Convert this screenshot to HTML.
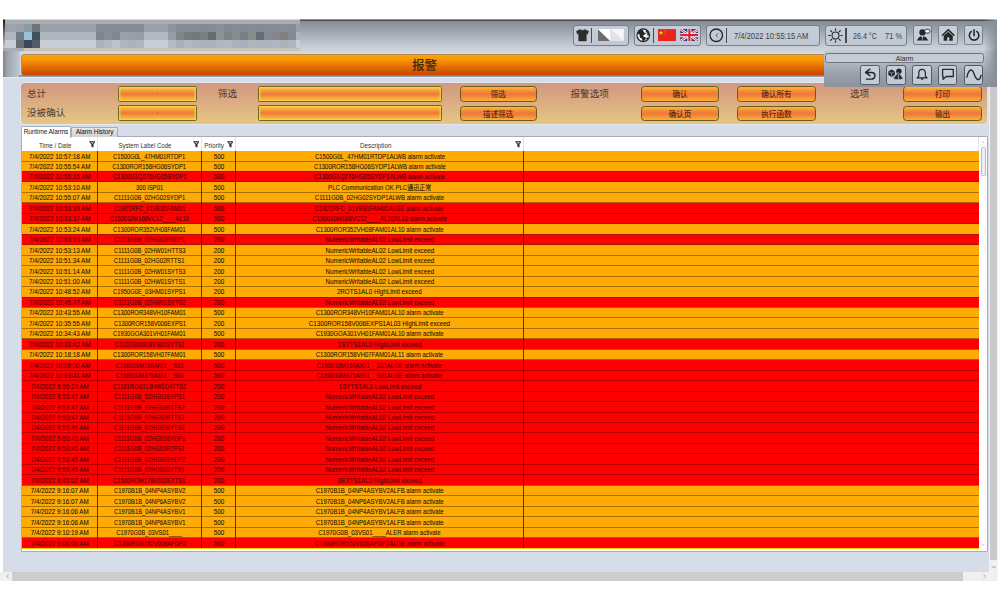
<!DOCTYPE html>
<html lang="zh"><head><meta charset="utf-8"><title>报警</title>
<style>
html,body{margin:0;padding:0;background:#fff;}
body{width:1000px;height:600px;overflow:hidden;position:relative;font-family:"Liberation Sans","Noto Sans CJK SC",sans-serif;}
#app{position:absolute;left:0;top:0;width:1000px;height:600px;overflow:hidden;}
#app div,#app span,#app svg{position:absolute;box-sizing:border-box;}
#bg{left:3px;top:19.5px;width:994px;height:560.5px;background:#d6dde9;}
#bgu{left:3px;top:76.5px;width:994px;height:2.5px;background:linear-gradient(to bottom,#e6ebf2,#d6dde9);}
#hdr{left:3px;top:19px;width:994px;height:57.5px;background:linear-gradient(to bottom,#7e848c 0,#8c929a 8%,#adb3bb 30%,#cbd0d8 50%,#d5dae2 60%,#d3d9e2 100%);}
#hdrtop{left:299.8px;top:19px;width:697.2px;height:2.4px;background:linear-gradient(to bottom,#111316,#2a2d31 45%,#6a7078);}
#hdrl{left:3px;top:19px;width:17px;height:57.5px;background:linear-gradient(to right,#7f858d 0,#9ea4ac 25%,#c4c9d1 100%);}
#hdrl2{left:3px;top:19px;width:1.5px;height:30px;background:linear-gradient(to bottom,#111,#888 60%,rgba(200,200,200,0));}
#hdrr{left:984px;top:19px;width:13px;height:67.5px;background:linear-gradient(to right,rgba(150,156,164,0) 0,#8a9098 100%);}
#hdrb{left:19px;top:75px;width:978px;height:1.8px;background:linear-gradient(to bottom,rgba(110,124,144,0.75),rgba(130,142,160,0.75));}
#pix{left:3px;top:19px;width:296.8px;height:32.4px;overflow:hidden;background:#a9adb1;}
#pix i{position:absolute;width:8px;height:8px;display:block;}
#pixb{left:24px;top:48px;width:276px;height:3.2px;background:#cbc3b8;}
#obar{left:20.5px;top:54px;width:812px;height:21.5px;border:1px solid #8495ad;border-top-color:#b08a50;border-radius:3.5px;background:linear-gradient(to bottom,#ffa400 0,#f79400 25%,#e67400 55%,#d45400 85%,#c84600 100%);}
#otitle{left:20.5px;top:56.3px;width:808px;height:21.5px;text-align:center;font-size:12.5px;line-height:21px;color:#40260f;font-weight:500;}
.grp{border:1px solid #76808d;border-radius:3px;background:linear-gradient(to bottom,#c5cdd8,#c0c8d3);top:25.3px;height:20.3px;}
.sep{width:1.2px;background:#4a4a4a;top:27.9px;height:15.2px;}
.htxt{font-size:8.8px;line-height:22px;color:#3e3e3e;top:25.3px;height:20.3px;white-space:nowrap;}
.htxt span{position:static !important;display:inline-block;transform-origin:0 50%;}
.btn{border:1px solid #76808d;border-radius:2.5px;background:linear-gradient(to bottom,#c7cfda,#c1c9d4);}
.btn.sb{border-color:#535b65;}
#sub{left:824.3px;top:49.8px;width:172.7px;height:37.2px;background:linear-gradient(to bottom,#c6cbd3 0,#b3b9c2 30%,#9aa1ab 65%,#8b929c 100%);border-radius:3px 0 0 2px;}
#subr{left:984px;top:49.5px;width:13px;height:37.5px;background:linear-gradient(to right,rgba(150,156,164,0) 0,#878d95 100%);}
#alab{left:825.3px;top:52.8px;width:158.5px;height:9.9px;border:1px solid #6b7480;border-radius:2.5px;background:#c4ccd7;font-size:6.7px;line-height:9.4px;text-align:center;color:#2a2a2a;}
/* panel */
#panel{left:19.8px;top:81.5px;width:968px;height:43.3px;border-radius:4px;background:linear-gradient(to bottom,#d3987f 0,#dbab82 45%,#e6c682 100%);border:1px solid #dfe8f2;background-clip:padding-box;}
.lab{font-size:9.6px;color:#4a3a30;white-space:nowrap;line-height:14px;height:14px;}
.inp{border:1px solid #6e6a28;border-radius:1.5px;height:15.5px;background:
 linear-gradient(to right,rgba(252,214,60,0.9) 0,rgba(252,214,60,0) 2.5px,rgba(252,214,60,0) calc(100% - 2.5px),rgba(252,214,60,0.9) 100%),
 linear-gradient(to bottom,#fcd63c 0,#f8ac3c 18%,#ee7a3a 50%,#f8ac3c 82%,#fcd63c 100%);}
.inp b{position:absolute;left:50%;top:6px;width:1.6px;height:1.6px;margin-left:-0.8px;background:#8a7a70;border-radius:1px;}
.pb{border:1px solid #6a5a1c;border-radius:3.5px;height:15.6px;text-align:center;font-size:7.6px;font-weight:500;line-height:15.4px;color:#5e2a10;white-space:nowrap;background:
 linear-gradient(to bottom,#fdbb2e 0,#f6943a 24%,#ee7a3c 45%,#ee7a3c 55%,#f6943a 77%,#fbb030 100%);}
/* tabs + grid */
#tabs{left:0;top:0;width:0;height:0;}
.tab{font-size:6.5px;line-height:9.5px;white-space:nowrap;text-align:center;color:#222;letter-spacing:-0.1px;}
.tab.sel{left:21px;top:126px;width:50px;height:11.5px;background:#fff;border:1px solid #a9b2bf;border-bottom:none;border-radius:1.5px 1.5px 0 0;}
.tab.uns{left:71.3px;top:126.8px;width:46.5px;height:10.2px;background:linear-gradient(to bottom,#e6e6e6,#d2d2d2);border:1px solid #a3abb7;border-bottom:none;border-radius:1.5px 1.5px 0 0;color:#111;line-height:8.5px;}
#grid{left:21px;top:136px;width:966.5px;height:416px;background:#fff;border:1px solid #a4adba;border-radius:0 1px 1px 1px;overflow:hidden;}
#ghead{left:0;top:0;width:966px;height:13.5px;background:#fff;}
.hc{top:0;height:13.5px;border-right:1px solid #e0e3e8;font-size:7.1px;line-height:18.2px;text-align:center;color:#333;white-space:nowrap;padding-right:8.5px;}
.hc span{position:static !important;display:inline-block;transform:scaleX(0.89);}
.fun{width:6.8px;height:6.8px;top:4.4px;right:1.6px;}
.row{left:0px;width:956.6px;height:10.46px;}
.row.o{background:#ffab05;}
.row.r{background:#ff0000;}
.row::before{content:"";position:absolute;left:0;right:0;top:-0.45px;height:0.9px;background:rgba(80,45,0,0.48);z-index:2;}
.row.r::before{background:rgba(90,0,0,0.42);}
.row.first::before{display:none}
.row.o+.row.r::before,.row.r+.row.o::before{background:rgba(110,30,0,0.55);}
.c{top:0;height:10.46px;border-right:1px solid rgba(40,20,0,0.75);font-size:7.1px;line-height:12.6px;text-align:center;color:#151005;white-space:nowrap;overflow:hidden;-webkit-text-stroke:0.06px currentColor;}
.c span{position:static !important;display:inline-block;}
.s887{transform:scaleX(.887)}.s818{transform:scaleX(.818)}.s890{transform:scaleX(.89)}.s845{transform:scaleX(.845)}.s850{transform:scaleX(.85)}.s878{transform:scaleX(.878)}
.row.r .c{color:#4c0000;}
#vsb{left:957.5px;top:0;width:8px;height:416px;background:#fdfdfd;}
#vsb .th{left:1.6px;top:9.5px;width:4.6px;height:29.5px;background:#eceff3;border:1px solid #b9bec6;border-radius:1.5px;}
#vsb .ar{left:2.3px;width:0;height:0;border-left:1.7px solid transparent;border-right:1.7px solid transparent;}
#vsb .up{border-bottom:2.2px solid #c8c8c8;}
#vsb .dn{border-top:2.2px solid #c8c8c8;}
#ylast{left:0px;width:956.6px;height:1.2px;background:#ffd800;}
#hsb{left:0px;top:571.5px;width:988.5px;height:9px;background:#f0f0f0;}
#hsb .hth{left:11.7px;top:0;width:951.3px;height:9.5px;background:#cdcdcd;}
#hsb svg{top:2.5px;width:3.5px;height:5px;}
#hsb .la{left:5.5px;}
#hsb .ra{left:982.5px;}
#osb{left:988.5px;top:86.5px;width:9.5px;height:494px;background:linear-gradient(to right,#f0f0f0 85%,#f8f8f8);}
#osb .vth{left:1px;top:0;width:7px;height:473px;background:#cacaca;}
#osb svg{left:2px;top:478px;width:5.5px;height:4px;}

#topaa{left:0;top:19px;width:1000px;height:1px;background:rgba(255,255,255,0.5);}
.c:last-child{border-right:none;}

</style></head><body>
<div id="app">
<div id="bg"></div><div id="bgu"></div>
<div id="panel"></div>
<div class="lab" style="left:27px;top:87px">总计</div><div class="lab" style="left:27px;top:106px">没被确认</div><div class="lab" style="left:218px;top:87px">筛选</div><div class="lab" style="left:570.5px;top:87px">报警选项</div><div class="lab" style="left:850px;top:87px">选项</div>
<div class="inp" style="left:118.2px;top:86.3px;width:78.5px"><b></b></div><div class="inp" style="left:118.2px;top:105.3px;width:78.5px"><b></b></div><div class="inp" style="left:258.2px;top:86.3px;width:183.5px"></div><div class="inp" style="left:258.2px;top:105.3px;width:183.5px"></div>
<div class="pb" style="left:459.5px;top:86.2px;width:77.5px">筛选</div><div class="pb" style="left:459.5px;top:105.5px;width:77.5px">描述筛选</div><div class="pb" style="left:640.8px;top:86.2px;width:78.5px">确认</div><div class="pb" style="left:640.8px;top:105.5px;width:78.5px">确认页</div><div class="pb" style="left:737px;top:86.2px;width:78.8px">确认所有</div><div class="pb" style="left:737px;top:105.5px;width:78.8px">执行函数</div><div class="pb" style="left:903.4px;top:86.2px;width:78.2px">打印</div><div class="pb" style="left:903.4px;top:105.5px;width:78.2px">输出</div>
<div id="hdr"></div><div id="hdrtop"></div><div id="hdrl"></div><div id="hdrr"></div>
<div id="pix"><i style="left:0px;top:5px;width:5.3px;background:#9ba1a9"></i><i style="left:5px;top:5px;width:8.3px;background:#9ea4ac"></i><i style="left:13px;top:5px;width:8.3px;background:#9aa0a8"></i><i style="left:21px;top:5px;width:8.3px;background:#8a9ba6"></i><i style="left:29px;top:5px;width:8.3px;background:#707479"></i><i style="left:37px;top:5px;width:8.3px;background:#9ba1a9"></i><i style="left:45px;top:5px;width:8.3px;background:#9ba1a9"></i><i style="left:53px;top:5px;width:8.3px;background:#9ba1a9"></i><i style="left:61px;top:5px;width:8.3px;background:#9ba1a9"></i><i style="left:69px;top:5px;width:8.3px;background:#9ba1a9"></i><i style="left:77px;top:5px;width:8.3px;background:#9ba1a9"></i><i style="left:85px;top:5px;width:8.3px;background:#9ba1a9"></i><i style="left:93px;top:5px;width:8.3px;background:#878c94"></i><i style="left:101px;top:5px;width:8.3px;background:#878c94"></i><i style="left:109px;top:5px;width:8.3px;background:#878c94"></i><i style="left:117px;top:5px;width:8.3px;background:#878c94"></i><i style="left:125px;top:5px;width:8.3px;background:#878c94"></i><i style="left:133px;top:5px;width:8.3px;background:#878c94"></i><i style="left:141px;top:5px;width:8.3px;background:#9ba1a9"></i><i style="left:149px;top:5px;width:8.3px;background:#9ba1a9"></i><i style="left:157px;top:5px;width:8.3px;background:#9ba1a9"></i><i style="left:165px;top:5px;width:8.3px;background:#8f949c"></i><i style="left:173px;top:5px;width:8.3px;background:#878c95"></i><i style="left:181px;top:5px;width:8.3px;background:#868b94"></i><i style="left:189px;top:5px;width:8.3px;background:#888d95"></i><i style="left:197px;top:5px;width:8.3px;background:#848992"></i><i style="left:205px;top:5px;width:8.3px;background:#878c95"></i><i style="left:213px;top:5px;width:8.3px;background:#8a8f98"></i><i style="left:221px;top:5px;width:8.3px;background:#838891"></i><i style="left:229px;top:5px;width:8.3px;background:#868b94"></i><i style="left:237px;top:5px;width:8.3px;background:#858a93"></i><i style="left:245px;top:5px;width:8.3px;background:#878c95"></i><i style="left:253px;top:5px;width:8.3px;background:#868b93"></i><i style="left:261px;top:5px;width:8.3px;background:#888d94"></i><i style="left:269px;top:5px;width:8.3px;background:#878c94"></i><i style="left:277px;top:5px;width:8.3px;background:#8a8f97"></i><i style="left:285px;top:5px;width:8.3px;background:#868b95"></i><i style="left:293px;top:5px;width:4.3px;background:#9ba1a9"></i><i style="left:0px;top:13px;width:5.3px;background:#b0b6be"></i><i style="left:5px;top:13px;width:8.3px;background:#b2b8c0"></i><i style="left:13px;top:13px;width:8.3px;background:#6e7c85"></i><i style="left:21px;top:13px;width:8.3px;background:#9cc0d7"></i><i style="left:29px;top:13px;width:8.3px;background:#40525e"></i><i style="left:37px;top:13px;width:8.3px;background:#b0b6be"></i><i style="left:45px;top:13px;width:8.3px;background:#b0b6be"></i><i style="left:53px;top:13px;width:8.3px;background:#b0b6be"></i><i style="left:61px;top:13px;width:8.3px;background:#b0b6be"></i><i style="left:69px;top:13px;width:8.3px;background:#b0b6be"></i><i style="left:77px;top:13px;width:8.3px;background:#b0b6be"></i><i style="left:85px;top:13px;width:8.3px;background:#b0b6be"></i><i style="left:93px;top:13px;width:8.3px;background:#80858c"></i><i style="left:101px;top:13px;width:8.3px;background:#8a8e94"></i><i style="left:109px;top:13px;width:8.3px;background:#82868e"></i><i style="left:117px;top:13px;width:8.3px;background:#9aa0a8"></i><i style="left:125px;top:13px;width:8.3px;background:#999fa6"></i><i style="left:133px;top:13px;width:8.3px;background:#989ea6"></i><i style="left:141px;top:13px;width:8.3px;background:#b4bac3"></i><i style="left:149px;top:13px;width:8.3px;background:#b4bac3"></i><i style="left:157px;top:13px;width:8.3px;background:#b4bac3"></i><i style="left:165px;top:13px;width:8.3px;background:#9a9da2"></i><i style="left:173px;top:13px;width:8.3px;background:#808489"></i><i style="left:181px;top:13px;width:8.3px;background:#787c80"></i><i style="left:189px;top:13px;width:8.3px;background:#74787b"></i><i style="left:197px;top:13px;width:8.3px;background:#7b7e82"></i><i style="left:205px;top:13px;width:8.3px;background:#6a6c70"></i><i style="left:213px;top:13px;width:8.3px;background:#8b9099"></i><i style="left:221px;top:13px;width:8.3px;background:#7c818a"></i><i style="left:229px;top:13px;width:8.3px;background:#8a8c90"></i><i style="left:237px;top:13px;width:8.3px;background:#7a808a"></i><i style="left:245px;top:13px;width:8.3px;background:#8b8c8e"></i><i style="left:253px;top:13px;width:8.3px;background:#666c76"></i><i style="left:261px;top:13px;width:8.3px;background:#888a8e"></i><i style="left:269px;top:13px;width:8.3px;background:#828690"></i><i style="left:277px;top:13px;width:8.3px;background:#808082"></i><i style="left:285px;top:13px;width:8.3px;background:#858a94"></i><i style="left:293px;top:13px;width:4.3px;background:#b0b6be"></i><i style="left:0px;top:21px;width:5.3px;background:#c8ced6"></i><i style="left:5px;top:21px;width:8.3px;background:#c8ced6"></i><i style="left:13px;top:21px;width:8.3px;background:#6a6f76"></i><i style="left:21px;top:21px;width:8.3px;background:#3a4858"></i><i style="left:29px;top:21px;width:8.3px;background:#565c66"></i><i style="left:37px;top:21px;width:8.3px;background:#c8ced6"></i><i style="left:45px;top:21px;width:8.3px;background:#c8ced6"></i><i style="left:53px;top:21px;width:8.3px;background:#c8ced6"></i><i style="left:61px;top:21px;width:8.3px;background:#c8ced6"></i><i style="left:69px;top:21px;width:8.3px;background:#c8ced6"></i><i style="left:77px;top:21px;width:8.3px;background:#c8ced6"></i><i style="left:85px;top:21px;width:8.3px;background:#c8ced6"></i><i style="left:93px;top:21px;width:8.3px;background:#aab1ba"></i><i style="left:101px;top:21px;width:8.3px;background:#b4bac3"></i><i style="left:109px;top:21px;width:8.3px;background:#bcc2cb"></i><i style="left:117px;top:21px;width:8.3px;background:#b0b6bf"></i><i style="left:125px;top:21px;width:8.3px;background:#acb2bb"></i><i style="left:133px;top:21px;width:8.3px;background:#b0b6bf"></i><i style="left:141px;top:21px;width:8.3px;background:#c8ced6"></i><i style="left:149px;top:21px;width:8.3px;background:#c8ced6"></i><i style="left:157px;top:21px;width:8.3px;background:#c8ced6"></i><i style="left:165px;top:21px;width:8.3px;background:#b6bcc5"></i><i style="left:173px;top:21px;width:8.3px;background:#a9afb8"></i><i style="left:181px;top:21px;width:8.3px;background:#b4bac4"></i><i style="left:189px;top:21px;width:8.3px;background:#adb3bc"></i><i style="left:197px;top:21px;width:8.3px;background:#acb2bb"></i><i style="left:205px;top:21px;width:8.3px;background:#abb1ba"></i><i style="left:213px;top:21px;width:8.3px;background:#b2b8c1"></i><i style="left:221px;top:21px;width:8.3px;background:#b4bac4"></i><i style="left:229px;top:21px;width:8.3px;background:#abb1bb"></i><i style="left:237px;top:21px;width:8.3px;background:#a9afb9"></i><i style="left:245px;top:21px;width:8.3px;background:#b0b6bf"></i><i style="left:253px;top:21px;width:8.3px;background:#adb3bc"></i><i style="left:261px;top:21px;width:8.3px;background:#aeb4bd"></i><i style="left:269px;top:21px;width:8.3px;background:#b1b7c1"></i><i style="left:277px;top:21px;width:8.3px;background:#acb2bb"></i><i style="left:285px;top:21px;width:8.3px;background:#b0b6bf"></i><i style="left:293px;top:21px;width:4.3px;background:#c8ced6"></i></div><div id="pixb"></div>
<div id="hdrl2"></div><div id="obar"></div><div id="otitle">报警</div><div id="hdrb"></div>
<div class="grp" style="left:572.7px;width:56.7px"></div><svg style="left:575.5px;top:29.3px;width:13px;height:12.4px" viewBox="0 0 13 12.4"><path d="M4.300 .4C5 1.600 8 1.600 8.700 .4L12.600 2.300 11.500 5.200 10.300 4.700V12H2.700V4.700L1.500 5.200.4 2.300z" fill="#2d2d2d" stroke="#2d2d2d" stroke-width=".5" stroke-linejoin="round"/></svg><div class="sep" style="left:590.8px"></div><svg style="left:598.3px;top:29.2px;width:25.8px;height:12.2px" viewBox="0 0 25.8 12.2"><rect width="12.700" height="12.200" fill="#fdfdfd"/><path d="M0 0L12.700 12.200H0z" fill="#6b6b6b"/><path d="M0 0L12.700 12.200" stroke="#fff" stroke-width=".7"/><rect x="12.700" width="13.100" height="12.200" fill="#f6f6f6"/><path d="M12.700 0L25.800 12.200H12.700z" fill="#dde3eb"/></svg>
<div class="grp" style="left:634.3px;width:67px"></div><svg style="left:636.35px;top:28.25px;width:14.5px;height:14.5px" viewBox="0 0 14.5 14.5"><circle cx="7.250" cy="7.250" r="6.300" fill="#f2f4f6" stroke="#262626" stroke-width="1.200"/><path d="M6.800 1.200C4.200 1.500 2 3.300 1.300 5.800c.7.500 1.600.3 2.200 1 .6.900-.2 1.800.5 2.700.8.800 1.900.6 2.300 1.700.3 1-.1 2 .5 3 1-.4 1.400-1.400 2.100-2.100.7-.8 1.300-1.500.8-2.500-.7-.7-1.800-.6-2.400-1.400-.4-.8.500-1.300 1.100-1.700.6-.300 1.400-.300 1.500-1.100-.3-.8-1.300-.6-1.800-1-.5-.700-.6-1.700-1.300-2.200z" fill="#262626"/><path d="M10.200 2.200c-.7.700-.4 1.700.3 2.200.8.300 1 1.100.7 1.800-.2.800.4 1.500 1.200 1.400.6.100 1-.500.9-1.200-.2-1.800-1.400-3.400-3.100-4.200z" fill="#262626"/><path d="M10.600 9.800c-.5.600-.3 1.500.1 2.100.8-.5 1.500-1.300 1.900-2.200-.7-.3-1.500-.4-2 .1z" fill="#262626"/></svg><div class="sep" style="left:653px"></div><svg style="left:658px;top:29.2px;width:18.3px;height:12.3px" viewBox="0 0 30 20"><rect width="30" height="20" fill="#e8261c"/><path d="M5 2.200l.9 2.700h2.800l-2.300 1.700.9 2.700L5 7.600 2.700 9.300l.9-2.700L1.300 4.900h2.800z" fill="#ffde2a"/><circle cx="10" cy="2.500" r=".7" fill="#ffde2a"/><circle cx="12" cy="4.500" r=".7" fill="#ffde2a"/><circle cx="12" cy="7.500" r=".7" fill="#ffde2a"/><circle cx="10" cy="9.500" r=".7" fill="#ffde2a"/></svg><svg style="left:679.7px;top:29.2px;width:18.8px;height:12.3px" viewBox="0 0 60 40"><rect width="60" height="40" fill="#24408e"/><path d="M0 0L60 40M60 0L0 40" stroke="#fff" stroke-width="8"/><path d="M0 0L60 40M60 0L0 40" stroke="#d8203a" stroke-width="3"/><path d="M30 0V40M0 20H60" stroke="#fff" stroke-width="13"/><path d="M30 0V40M0 20H60" stroke="#d8203a" stroke-width="7"/></svg>
<div class="grp" style="left:706.3px;width:113.7px"></div><svg style="left:708.95px;top:28.05px;width:14.5px;height:14.5px" viewBox="0 0 14.5 14.5"><circle cx="7.250" cy="7.250" r="6.250" fill="none" stroke="#262626" stroke-width="1.300"/><path d="M8.700 5.600L7 7.400l1.600 1.500" fill="none" stroke="#444" stroke-width=".9" stroke-linecap="round" stroke-linejoin="round"/></svg><div class="sep" style="left:726.3px"></div><div class="htxt" style="left:733.6px"><span style="transform:scaleX(.862)">7/4/2022 10:55:15 AM</span></div>
<div class="grp" style="left:825.4px;width:82px"></div><svg style="left:827.6px;top:28px;width:15px;height:15px" viewBox="0 0 15 15"><circle cx="7.500" cy="7.500" r="3.500" fill="none" stroke="#262626" stroke-width="1.150"/><path d="M7.500 .7v1.500M7.500 12.800v1.500M.7 7.500h1.500M12.800 7.500h1.500M2.700 2.700l1.050 1.050M11.250 11.250l1.050 1.050M2.700 12.300l1.050-1.050M11.250 3.750l1.050-1.050" stroke="#262626" stroke-width="1.100" stroke-linecap="round"/></svg><div class="sep" style="left:845.4px"></div><div class="htxt" style="left:853.4px"><span style="transform:scaleX(.808)">26.4 °C</span></div><div class="htxt" style="left:884.9px"><span style="transform:scaleX(.85)">71 %</span></div>
<div class="btn" style="left:912.6px;top:25.4px;width:19.9px;height:19.9px"></div><svg style="left:912.6px;top:25.4px;width:20px;height:20px" viewBox="0 0 20 20"><circle cx="9.400" cy="7.400" r="3.100" fill="#262626"/><path d="M3.800 15.500L6 12.300 8.100 11.300 9.450 13.300 10.800 11.300 12.900 12.300 15.400 15.500z" fill="#262626"/><path d="M9.450 13.300v2.300" stroke="#c4ccd7" stroke-width=".6"/><path d="M11.600 8.600l1.200-1.100" stroke="#262626" stroke-width=".8"/><rect x="11.700" y="4.300" width="5.400" height="3.800" rx="1.800" fill="#f0f3f6" stroke="#262626" stroke-width=".9"/></svg><div class="btn" style="left:938.1px;top:25.4px;width:19.9px;height:19.9px"></div><svg style="left:938.1px;top:25.4px;width:20px;height:20px" viewBox="0 0 20 20"><path d="M4.200 10.600L10.250 4.800 16.300 10.600" fill="none" stroke="#262626" stroke-width="1.500" stroke-linejoin="miter"/><path d="M5.700 11L10.250 6.800 14.800 11V15.700H5.700z" fill="#262626"/><rect x="9.150" y="12.300" width="2.200" height="3.500" fill="#c4ccd7"/></svg><div class="btn" style="left:963.5px;top:25.4px;width:19.9px;height:19.9px"></div><svg style="left:963.5px;top:25.4px;width:20px;height:20px" viewBox="0 0 20 20"><path d="M7.450 6.450A4.750 4.750 0 1 0 12.750 6.450" fill="none" stroke="#262626" stroke-width="1.550" stroke-linecap="round"/><path d="M10.100 4.700v6" stroke="#262626" stroke-width="1.550" stroke-linecap="round"/></svg>
<div id="sub"></div><div id="subr"></div><div id="alab">Alarm</div>
<div class="btn sb" style="left:860.1px;top:65.4px;width:19.9px;height:19.6px"></div><svg style="left:860.1px;top:65.4px;width:20px;height:20px" viewBox="0 0 20 20"><path d="M9.900 4.200L5.500 7.400l4.400 3.300M5.700 7.400H11.600a3.350 3.350 0 0 1 0 6.700H6.400" fill="none" stroke="#262626" stroke-width="1.450" stroke-linecap="round" stroke-linejoin="round"/></svg><div class="btn sb" style="left:885.8px;top:65.4px;width:19.9px;height:19.6px"></div><svg style="left:885.8px;top:65.4px;width:20px;height:20px" viewBox="0 0 20 20"><circle cx="12.900" cy="6.300" r="2.700" fill="#262626"/><path d="M5.60 4.40L8.89 6.30L8.89 10.10L5.60 12.00L2.31 10.10L2.31 6.30z" fill="#262626"/><path d="M2.71 6.60L5.60 8.20L8.49 6.60M5.60 8.20V11.50" fill="none" stroke="#c9d0da" stroke-width=".55"/><path d="M12.300 7.200L17.300 13.600Q12.300 16 7.100 13.600z" fill="#262626" stroke="#c4ccd7" stroke-width=".5"/><path d="M12.300 9v6" stroke="#b9c0ca" stroke-width=".9"/></svg><div class="btn sb" style="left:911.7px;top:65.4px;width:19.9px;height:19.6px"></div><svg style="left:911.7px;top:65.4px;width:20px;height:20px" viewBox="0 0 20 20"><path d="M10.100 4.300c-2.100 0-3.300 1.600-3.300 3.600v3.300l-1.700 1.700h10l-1.700-1.700V7.900c0-2-1.200-3.600-3.300-3.600z" fill="none" stroke="#262626" stroke-width="1.200" stroke-linejoin="round"/><path d="M8.900 13.700a1.250 1.250 0 0 0 2.400 0z" fill="#262626" stroke="#262626" stroke-width=".5"/></svg><div class="btn sb" style="left:937.6px;top:65.4px;width:19.9px;height:19.6px"></div><svg style="left:937.6px;top:65.4px;width:20px;height:20px" viewBox="0 0 20 20"><path d="M4.600 4.400h10.700v7.100H8.200l-3.100 2.800V11.500H4.600z" fill="none" stroke="#262626" stroke-width="1.300" stroke-linejoin="round"/></svg><div class="btn sb" style="left:963.6px;top:65.4px;width:19.9px;height:19.6px"></div><svg style="left:963.6px;top:65.4px;width:20px;height:20px" viewBox="0 0 20 20"><path d="M2.800 12.200C4 6.500 6 4.300 7.800 5.200c2.600 1.200 2.700 8.500 6 9.300 1.700.300 2.700-1.600 3.300-4.200" fill="none" stroke="#262626" stroke-width="1.350" stroke-linecap="round"/></svg><div id="topaa"></div>
<div id="grid">
<div id="ghead"><div class="hc hc0" style="left:0.0px;width:76.0px"><span>Time / Date</span><svg class="fun" viewBox="0 0 10 10"><path d="M.6 .8h8.800L6.200 4.800v4.400L3.800 7.800V4.800z" fill="#2a2a2a" stroke="#2a2a2a" stroke-width=".8" stroke-linejoin="round"/><path d="M3 1.900h4L5 4.200z" fill="#fff"/></svg></div><div class="hc hc1" style="left:76.0px;width:104.0px"><span style="transform:scaleX(.855)">System Label Code</span><svg class="fun" viewBox="0 0 10 10"><path d="M.6 .8h8.800L6.200 4.800v4.400L3.800 7.800V4.800z" fill="#2a2a2a" stroke="#2a2a2a" stroke-width=".8" stroke-linejoin="round"/><path d="M3 1.900h4L5 4.200z" fill="#fff"/></svg></div><div class="hc hc2" style="left:180.0px;width:34.0px"><span>Priority</span><svg class="fun" viewBox="0 0 10 10"><path d="M.6 .8h8.800L6.200 4.800v4.400L3.800 7.800V4.800z" fill="#2a2a2a" stroke="#2a2a2a" stroke-width=".8" stroke-linejoin="round"/><path d="M3 1.900h4L5 4.200z" fill="#fff"/></svg></div><div class="hc hc3" style="left:214.0px;width:288.0px"><span>Description</span><svg class="fun" viewBox="0 0 10 10"><path d="M.6 .8h8.800L6.200 4.800v4.400L3.800 7.800V4.800z" fill="#2a2a2a" stroke="#2a2a2a" stroke-width=".8" stroke-linejoin="round"/><path d="M3 1.900h4L5 4.200z" fill="#fff"/></svg></div><div class="hc hc4" style="left:502.0px;width:455.0px"></div></div>
<div class="row o first" style="top:13.50px"><div class="c" style="left:0.0px;width:76.0px"><span class="s887">7/4/2022 10:57:18 AM</span></div><div class="c" style="left:76.0px;width:104.0px"><span class="s818">C1500G0L_47HM01RTDP1</span></div><div class="c" style="left:180.0px;width:34.0px"><span class="s890">500</span></div><div class="c" style="left:214.0px;width:288.0px"><span class="s845">C1500G0L_47HM01RTDP1ALWB alarm activate</span></div><div class="c" style="left:502.0px;width:455.0px"></div></div>
<div class="row o" style="top:23.96px"><div class="c" style="left:0.0px;width:76.0px"><span class="s887">7/4/2022 10:55:54 AM</span></div><div class="c" style="left:76.0px;width:104.0px"><span class="s818">C1300ROR158HG06SYDP1</span></div><div class="c" style="left:180.0px;width:34.0px"><span class="s890">500</span></div><div class="c" style="left:214.0px;width:288.0px"><span class="s845">C1300ROR158HG06SYDP1ALWB alarm activate</span></div><div class="c" style="left:502.0px;width:455.0px"></div></div>
<div class="row r" style="top:34.42px"><div class="c" style="left:0.0px;width:76.0px"><span class="s887">7/4/2022 10:55:15 AM</span></div><div class="c" style="left:76.0px;width:104.0px"><span class="s818">C1300G1Q276HG05SYDP1</span></div><div class="c" style="left:180.0px;width:34.0px"><span class="s890">500</span></div><div class="c" style="left:214.0px;width:288.0px"><span class="s845">C1300G1Q276HG05SYDP1ALWB alarm activate</span></div><div class="c" style="left:502.0px;width:455.0px"></div></div>
<div class="row o" style="top:44.88px"><div class="c" style="left:0.0px;width:76.0px"><span class="s887">7/4/2022 10:53:10 AM</span></div><div class="c" style="left:76.0px;width:104.0px"><span class="s818">300 ISP01</span></div><div class="c" style="left:180.0px;width:34.0px"><span class="s890">500</span></div><div class="c" style="left:214.0px;width:288.0px"><span class="s850">PLC Communication OK PLC通迅正常</span></div><div class="c" style="left:502.0px;width:455.0px"></div></div>
<div class="row o" style="top:55.34px"><div class="c" style="left:0.0px;width:76.0px"><span class="s887">7/4/2022 10:55:07 AM</span></div><div class="c" style="left:76.0px;width:104.0px"><span class="s818">C1111G0B_02HG02SYDP1</span></div><div class="c" style="left:180.0px;width:34.0px"><span class="s890">500</span></div><div class="c" style="left:214.0px;width:288.0px"><span class="s845">C1111G0B_02HG02SYDP1ALWB alarm activate</span></div><div class="c" style="left:502.0px;width:455.0px"></div></div>
<div class="row r" style="top:65.80px"><div class="c" style="left:0.0px;width:76.0px"><span class="s887">7/4/2022 10:53:39 AM</span></div><div class="c" style="left:76.0px;width:104.0px"><span class="s818">C1921RFC_01VE81FAM01</span></div><div class="c" style="left:180.0px;width:34.0px"><span class="s890">500</span></div><div class="c" style="left:214.0px;width:288.0px"><span class="s845">C1921RFC_01VE81FAM01ALGE alarm activate</span></div><div class="c" style="left:502.0px;width:455.0px"></div></div>
<div class="row r" style="top:76.26px"><div class="c" style="left:0.0px;width:76.0px"><span class="s887">7/4/2022 10:53:37 AM</span></div><div class="c" style="left:76.0px;width:104.0px"><span class="s818">C150010M168VC12____AL10</span></div><div class="c" style="left:180.0px;width:34.0px"><span class="s890">500</span></div><div class="c" style="left:214.0px;width:288.0px"><span class="s845">C150010M168VC12____AL10AL10 alarm activate</span></div><div class="c" style="left:502.0px;width:455.0px"></div></div>
<div class="row o" style="top:86.72px"><div class="c" style="left:0.0px;width:76.0px"><span class="s887">7/4/2022 10:53:24 AM</span></div><div class="c" style="left:76.0px;width:104.0px"><span class="s818">C1300ROR352VH08FAM01</span></div><div class="c" style="left:180.0px;width:34.0px"><span class="s890">500</span></div><div class="c" style="left:214.0px;width:288.0px"><span class="s845">C1300ROR352VH08FAM01AL10 alarm activate</span></div><div class="c" style="left:502.0px;width:455.0px"></div></div>
<div class="row r" style="top:97.18px"><div class="c" style="left:0.0px;width:76.0px"><span class="s887">7/4/2022 10:53:13 AM</span></div><div class="c" style="left:76.0px;width:104.0px"><span class="s818">C1111G0B_02HG02RTDP1</span></div><div class="c" style="left:180.0px;width:34.0px"><span class="s890">200</span></div><div class="c" style="left:214.0px;width:288.0px"><span class="s878">NumericWritableAL02 LowLimit exceed</span></div><div class="c" style="left:502.0px;width:455.0px"></div></div>
<div class="row o" style="top:107.64px"><div class="c" style="left:0.0px;width:76.0px"><span class="s887">7/4/2022 10:53:13 AM</span></div><div class="c" style="left:76.0px;width:104.0px"><span class="s818">C1111G0B_02HW01HTTS3</span></div><div class="c" style="left:180.0px;width:34.0px"><span class="s890">200</span></div><div class="c" style="left:214.0px;width:288.0px"><span class="s878">NumericWritableAL02 LowLimit exceed</span></div><div class="c" style="left:502.0px;width:455.0px"></div></div>
<div class="row o" style="top:118.10px"><div class="c" style="left:0.0px;width:76.0px"><span class="s887">7/4/2022 10:51:34 AM</span></div><div class="c" style="left:76.0px;width:104.0px"><span class="s818">C1111G0B_02HG02RTTS1</span></div><div class="c" style="left:180.0px;width:34.0px"><span class="s890">200</span></div><div class="c" style="left:214.0px;width:288.0px"><span class="s878">NumericWritableAL02 LowLimit exceed</span></div><div class="c" style="left:502.0px;width:455.0px"></div></div>
<div class="row o" style="top:128.56px"><div class="c" style="left:0.0px;width:76.0px"><span class="s887">7/4/2022 10:51:14 AM</span></div><div class="c" style="left:76.0px;width:104.0px"><span class="s818">C1111G0B_02HW01SYTS3</span></div><div class="c" style="left:180.0px;width:34.0px"><span class="s890">200</span></div><div class="c" style="left:214.0px;width:288.0px"><span class="s878">NumericWritableAL02 LowLimit exceed</span></div><div class="c" style="left:502.0px;width:455.0px"></div></div>
<div class="row o" style="top:139.02px"><div class="c" style="left:0.0px;width:76.0px"><span class="s887">7/4/2022 10:51:00 AM</span></div><div class="c" style="left:76.0px;width:104.0px"><span class="s818">C1111G0B_02HW01SYTS1</span></div><div class="c" style="left:180.0px;width:34.0px"><span class="s890">200</span></div><div class="c" style="left:214.0px;width:288.0px"><span class="s878">NumericWritableAL02 LowLimit exceed</span></div><div class="c" style="left:502.0px;width:455.0px"></div></div>
<div class="row o" style="top:149.48px"><div class="c" style="left:0.0px;width:76.0px"><span class="s887">7/4/2022 10:48:52 AM</span></div><div class="c" style="left:76.0px;width:104.0px"><span class="s818">C1950G0E_03HM01SYPS1</span></div><div class="c" style="left:180.0px;width:34.0px"><span class="s890">200</span></div><div class="c" style="left:214.0px;width:288.0px"><span class="s878">2ROTS1AL0 HighLimit exceed</span></div><div class="c" style="left:502.0px;width:455.0px"></div></div>
<div class="row r" style="top:159.94px"><div class="c" style="left:0.0px;width:76.0px"><span class="s887">7/4/2022 10:45:47 AM</span></div><div class="c" style="left:76.0px;width:104.0px"><span class="s818">C1111G0B_02HW01SYTS2</span></div><div class="c" style="left:180.0px;width:34.0px"><span class="s890">200</span></div><div class="c" style="left:214.0px;width:288.0px"><span class="s878">NumericWritableAL02 LowLimit exceed</span></div><div class="c" style="left:502.0px;width:455.0px"></div></div>
<div class="row o" style="top:170.40px"><div class="c" style="left:0.0px;width:76.0px"><span class="s887">7/4/2022 10:43:55 AM</span></div><div class="c" style="left:76.0px;width:104.0px"><span class="s818">C1300ROR348VH10FAM01</span></div><div class="c" style="left:180.0px;width:34.0px"><span class="s890">500</span></div><div class="c" style="left:214.0px;width:288.0px"><span class="s845">C1300ROR348VH10FAM01AL10 alarm activate</span></div><div class="c" style="left:502.0px;width:455.0px"></div></div>
<div class="row o" style="top:180.86px"><div class="c" style="left:0.0px;width:76.0px"><span class="s887">7/4/2022 10:35:55 AM</span></div><div class="c" style="left:76.0px;width:104.0px"><span class="s818">C1300ROR158V006EXPS1</span></div><div class="c" style="left:180.0px;width:34.0px"><span class="s890">200</span></div><div class="c" style="left:214.0px;width:288.0px"><span class="s878">C1300ROR158V006EXPS1AL03 HighLimit exceed</span></div><div class="c" style="left:502.0px;width:455.0px"></div></div>
<div class="row o" style="top:191.32px"><div class="c" style="left:0.0px;width:76.0px"><span class="s887">7/4/2022 10:34:43 AM</span></div><div class="c" style="left:76.0px;width:104.0px"><span class="s818">C1930GOA301VH01FAM01</span></div><div class="c" style="left:180.0px;width:34.0px"><span class="s890">500</span></div><div class="c" style="left:214.0px;width:288.0px"><span class="s845">C1930GOA301VH01FAM01AL10 alarm activate</span></div><div class="c" style="left:502.0px;width:455.0px"></div></div>
<div class="row r" style="top:201.78px"><div class="c" style="left:0.0px;width:76.0px"><span class="s887">7/4/2022 10:33:42 AM</span></div><div class="c" style="left:76.0px;width:104.0px"><span class="s818">C1102G00918VS01SYTS1</span></div><div class="c" style="left:180.0px;width:34.0px"><span class="s890">200</span></div><div class="c" style="left:214.0px;width:288.0px"><span class="s878">1SYTS1AL0 HighLimit exceed</span></div><div class="c" style="left:502.0px;width:455.0px"></div></div>
<div class="row o" style="top:212.24px"><div class="c" style="left:0.0px;width:76.0px"><span class="s887">7/4/2022 10:18:18 AM</span></div><div class="c" style="left:76.0px;width:104.0px"><span class="s818">C1300ROR158VH07FAM01</span></div><div class="c" style="left:180.0px;width:34.0px"><span class="s890">500</span></div><div class="c" style="left:214.0px;width:288.0px"><span class="s845">C1300ROR158VH07FAM01AL11 alarm activate</span></div><div class="c" style="left:502.0px;width:455.0px"></div></div>
<div class="row r" style="top:222.70px"><div class="c" style="left:0.0px;width:76.0px"><span class="s887">7/4/2022 10:09:30 AM</span></div><div class="c" style="left:76.0px;width:104.0px"><span class="s818">C150010M168AIG1__S01</span></div><div class="c" style="left:180.0px;width:34.0px"><span class="s890">500</span></div><div class="c" style="left:214.0px;width:288.0px"><span class="s845">C150010M168AIG1__S01ALGE alarm activate</span></div><div class="c" style="left:502.0px;width:455.0px"></div></div>
<div class="row r" style="top:233.16px"><div class="c" style="left:0.0px;width:76.0px"><span class="s887">7/4/2022 10:03:41 AM</span></div><div class="c" style="left:76.0px;width:104.0px"><span class="s818">C150010M375AIG1__S01</span></div><div class="c" style="left:180.0px;width:34.0px"><span class="s890">500</span></div><div class="c" style="left:214.0px;width:288.0px"><span class="s845">C150010M375AIG1__S01ALGE alarm activate</span></div><div class="c" style="left:502.0px;width:455.0px"></div></div>
<div class="row r" style="top:243.62px"><div class="c" style="left:0.0px;width:76.0px"><span class="s887">7/4/2022 9:56:24 AM</span></div><div class="c" style="left:76.0px;width:104.0px"><span class="s818">C1101ROB113HW01HTTS2</span></div><div class="c" style="left:180.0px;width:34.0px"><span class="s890">200</span></div><div class="c" style="left:214.0px;width:288.0px"><span class="s878">1SYTS1AL0 LowLimit exceed</span></div><div class="c" style="left:502.0px;width:455.0px"></div></div>
<div class="row r" style="top:254.08px"><div class="c" style="left:0.0px;width:76.0px"><span class="s887">7/4/2022 9:53:47 AM</span></div><div class="c" style="left:76.0px;width:104.0px"><span class="s818">C1111G0B_02HG03SYPS1</span></div><div class="c" style="left:180.0px;width:34.0px"><span class="s890">200</span></div><div class="c" style="left:214.0px;width:288.0px"><span class="s878">NumericWritableAL02 LowLimit exceed</span></div><div class="c" style="left:502.0px;width:455.0px"></div></div>
<div class="row r" style="top:264.54px"><div class="c" style="left:0.0px;width:76.0px"><span class="s887">7/4/2022 9:53:47 AM</span></div><div class="c" style="left:76.0px;width:104.0px"><span class="s818">C1111G0B_02HG03RTTS2</span></div><div class="c" style="left:180.0px;width:34.0px"><span class="s890">200</span></div><div class="c" style="left:214.0px;width:288.0px"><span class="s878">NumericWritableAL02 LowLimit exceed</span></div><div class="c" style="left:502.0px;width:455.0px"></div></div>
<div class="row r" style="top:275.00px"><div class="c" style="left:0.0px;width:76.0px"><span class="s887">7/4/2022 9:53:47 AM</span></div><div class="c" style="left:76.0px;width:104.0px"><span class="s818">C1111G0B_02HG03RTTS1</span></div><div class="c" style="left:180.0px;width:34.0px"><span class="s890">200</span></div><div class="c" style="left:214.0px;width:288.0px"><span class="s878">NumericWritableAL02 LowLimit exceed</span></div><div class="c" style="left:502.0px;width:455.0px"></div></div>
<div class="row r" style="top:285.46px"><div class="c" style="left:0.0px;width:76.0px"><span class="s887">7/4/2022 9:53:46 AM</span></div><div class="c" style="left:76.0px;width:104.0px"><span class="s818">C1111G0B_02HG03SYTS2</span></div><div class="c" style="left:180.0px;width:34.0px"><span class="s890">200</span></div><div class="c" style="left:214.0px;width:288.0px"><span class="s878">NumericWritableAL02 LowLimit exceed</span></div><div class="c" style="left:502.0px;width:455.0px"></div></div>
<div class="row r" style="top:295.92px"><div class="c" style="left:0.0px;width:76.0px"><span class="s887">7/4/2022 9:53:45 AM</span></div><div class="c" style="left:76.0px;width:104.0px"><span class="s818">C1111G0B_02HG03SYDP1</span></div><div class="c" style="left:180.0px;width:34.0px"><span class="s890">200</span></div><div class="c" style="left:214.0px;width:288.0px"><span class="s878">NumericWritableAL02 LowLimit exceed</span></div><div class="c" style="left:502.0px;width:455.0px"></div></div>
<div class="row r" style="top:306.38px"><div class="c" style="left:0.0px;width:76.0px"><span class="s887">7/4/2022 9:53:45 AM</span></div><div class="c" style="left:76.0px;width:104.0px"><span class="s818">C1111G0B_02HG03RTPS1</span></div><div class="c" style="left:180.0px;width:34.0px"><span class="s890">200</span></div><div class="c" style="left:214.0px;width:288.0px"><span class="s878">NumericWritableAL02 LowLimit exceed</span></div><div class="c" style="left:502.0px;width:455.0px"></div></div>
<div class="row r" style="top:316.84px"><div class="c" style="left:0.0px;width:76.0px"><span class="s887">7/4/2022 9:53:45 AM</span></div><div class="c" style="left:76.0px;width:104.0px"><span class="s818">C1111G0B_02HG02SYDP2</span></div><div class="c" style="left:180.0px;width:34.0px"><span class="s890">200</span></div><div class="c" style="left:214.0px;width:288.0px"><span class="s878">NumericWritableAL02 LowLimit exceed</span></div><div class="c" style="left:502.0px;width:455.0px"></div></div>
<div class="row r" style="top:327.30px"><div class="c" style="left:0.0px;width:76.0px"><span class="s887">7/4/2022 9:53:45 AM</span></div><div class="c" style="left:76.0px;width:104.0px"><span class="s818">C1111G0B_02HG03SYTS1</span></div><div class="c" style="left:180.0px;width:34.0px"><span class="s890">200</span></div><div class="c" style="left:214.0px;width:288.0px"><span class="s878">NumericWritableAL02 LowLimit exceed</span></div><div class="c" style="left:502.0px;width:455.0px"></div></div>
<div class="row r" style="top:337.76px"><div class="c" style="left:0.0px;width:76.0px"><span class="s887">7/4/2022 9:43:02 AM</span></div><div class="c" style="left:76.0px;width:104.0px"><span class="s818">C1500ROM178V022EXTS1</span></div><div class="c" style="left:180.0px;width:34.0px"><span class="s890">200</span></div><div class="c" style="left:214.0px;width:288.0px"><span class="s878">0EXTS1AL0 HighLimit exceed</span></div><div class="c" style="left:502.0px;width:455.0px"></div></div>
<div class="row o" style="top:348.22px"><div class="c" style="left:0.0px;width:76.0px"><span class="s887">7/4/2022 9:16:07 AM</span></div><div class="c" style="left:76.0px;width:104.0px"><span class="s818">C1970B1B_04NP4ASYBV2</span></div><div class="c" style="left:180.0px;width:34.0px"><span class="s890">500</span></div><div class="c" style="left:214.0px;width:288.0px"><span class="s845">C1970B1B_04NP4ASYBV2ALFB alarm activate</span></div><div class="c" style="left:502.0px;width:455.0px"></div></div>
<div class="row o" style="top:358.68px"><div class="c" style="left:0.0px;width:76.0px"><span class="s887">7/4/2022 9:16:07 AM</span></div><div class="c" style="left:76.0px;width:104.0px"><span class="s818">C1970B1B_04NP6ASYBV2</span></div><div class="c" style="left:180.0px;width:34.0px"><span class="s890">500</span></div><div class="c" style="left:214.0px;width:288.0px"><span class="s845">C1970B1B_04NP6ASYBV2ALFB alarm activate</span></div><div class="c" style="left:502.0px;width:455.0px"></div></div>
<div class="row o" style="top:369.14px"><div class="c" style="left:0.0px;width:76.0px"><span class="s887">7/4/2022 9:16:06 AM</span></div><div class="c" style="left:76.0px;width:104.0px"><span class="s818">C1970B1B_04NP4ASYBV1</span></div><div class="c" style="left:180.0px;width:34.0px"><span class="s890">500</span></div><div class="c" style="left:214.0px;width:288.0px"><span class="s845">C1970B1B_04NP4ASYBV1ALFB alarm activate</span></div><div class="c" style="left:502.0px;width:455.0px"></div></div>
<div class="row o" style="top:379.60px"><div class="c" style="left:0.0px;width:76.0px"><span class="s887">7/4/2022 9:16:06 AM</span></div><div class="c" style="left:76.0px;width:104.0px"><span class="s818">C1970B1B_04NP6ASYBV1</span></div><div class="c" style="left:180.0px;width:34.0px"><span class="s890">500</span></div><div class="c" style="left:214.0px;width:288.0px"><span class="s845">C1970B1B_04NP6ASYBV1ALFB alarm activate</span></div><div class="c" style="left:502.0px;width:455.0px"></div></div>
<div class="row o" style="top:390.06px"><div class="c" style="left:0.0px;width:76.0px"><span class="s887">7/4/2022 9:10:19 AM</span></div><div class="c" style="left:76.0px;width:104.0px"><span class="s818">C1970G0B_03VS01____</span></div><div class="c" style="left:180.0px;width:34.0px"><span class="s890">500</span></div><div class="c" style="left:214.0px;width:288.0px"><span class="s845">C1970G0B_03VS01____ALER alarm activate</span></div><div class="c" style="left:502.0px;width:455.0px"></div></div>
<div class="row r" style="top:400.52px"><div class="c" style="left:0.0px;width:76.0px"><span class="s887">7/4/2022 9:06:00 AM</span></div><div class="c" style="left:76.0px;width:104.0px"><span class="s818">C1300ROR152V008AFDP2</span></div><div class="c" style="left:180.0px;width:34.0px"><span class="s890">500</span></div><div class="c" style="left:214.0px;width:288.0px"><span class="s845">C1300ROR152V008AFDP2ALGE alarm activate</span></div><div class="c" style="left:502.0px;width:455.0px"></div></div>
<div id="ylast" style="top:410.98px"></div>
<div id="vsb"><div class="ar up" style="top:4px"></div><div class="th"></div><div class="ar dn" style="top:406.5px"></div></div>
</div>
<div id="tabs"><div class="tab sel">Runtime Alarms</div><div class="tab uns">Alarm History</div></div>
<div id="hsb"><div class="hth"></div><svg class="la" viewBox="0 0 7 10"><path d="M5.500 1L1.500 5l4 4" fill="none" stroke="#7a7a7a" stroke-width="1.300"/></svg><svg class="ra" viewBox="0 0 7 10"><path d="M1.500 1l4 4-4 4" fill="none" stroke="#7a7a7a" stroke-width="1.300"/></svg></div>
<div id="osb"><div class="vth"></div><svg viewBox="0 0 11 8"><path d="M1 1.500l4.500 4.500L10 1.500" fill="none" stroke="#7a7a7a" stroke-width="1.400"/></svg></div>
</div>
</body></html>
